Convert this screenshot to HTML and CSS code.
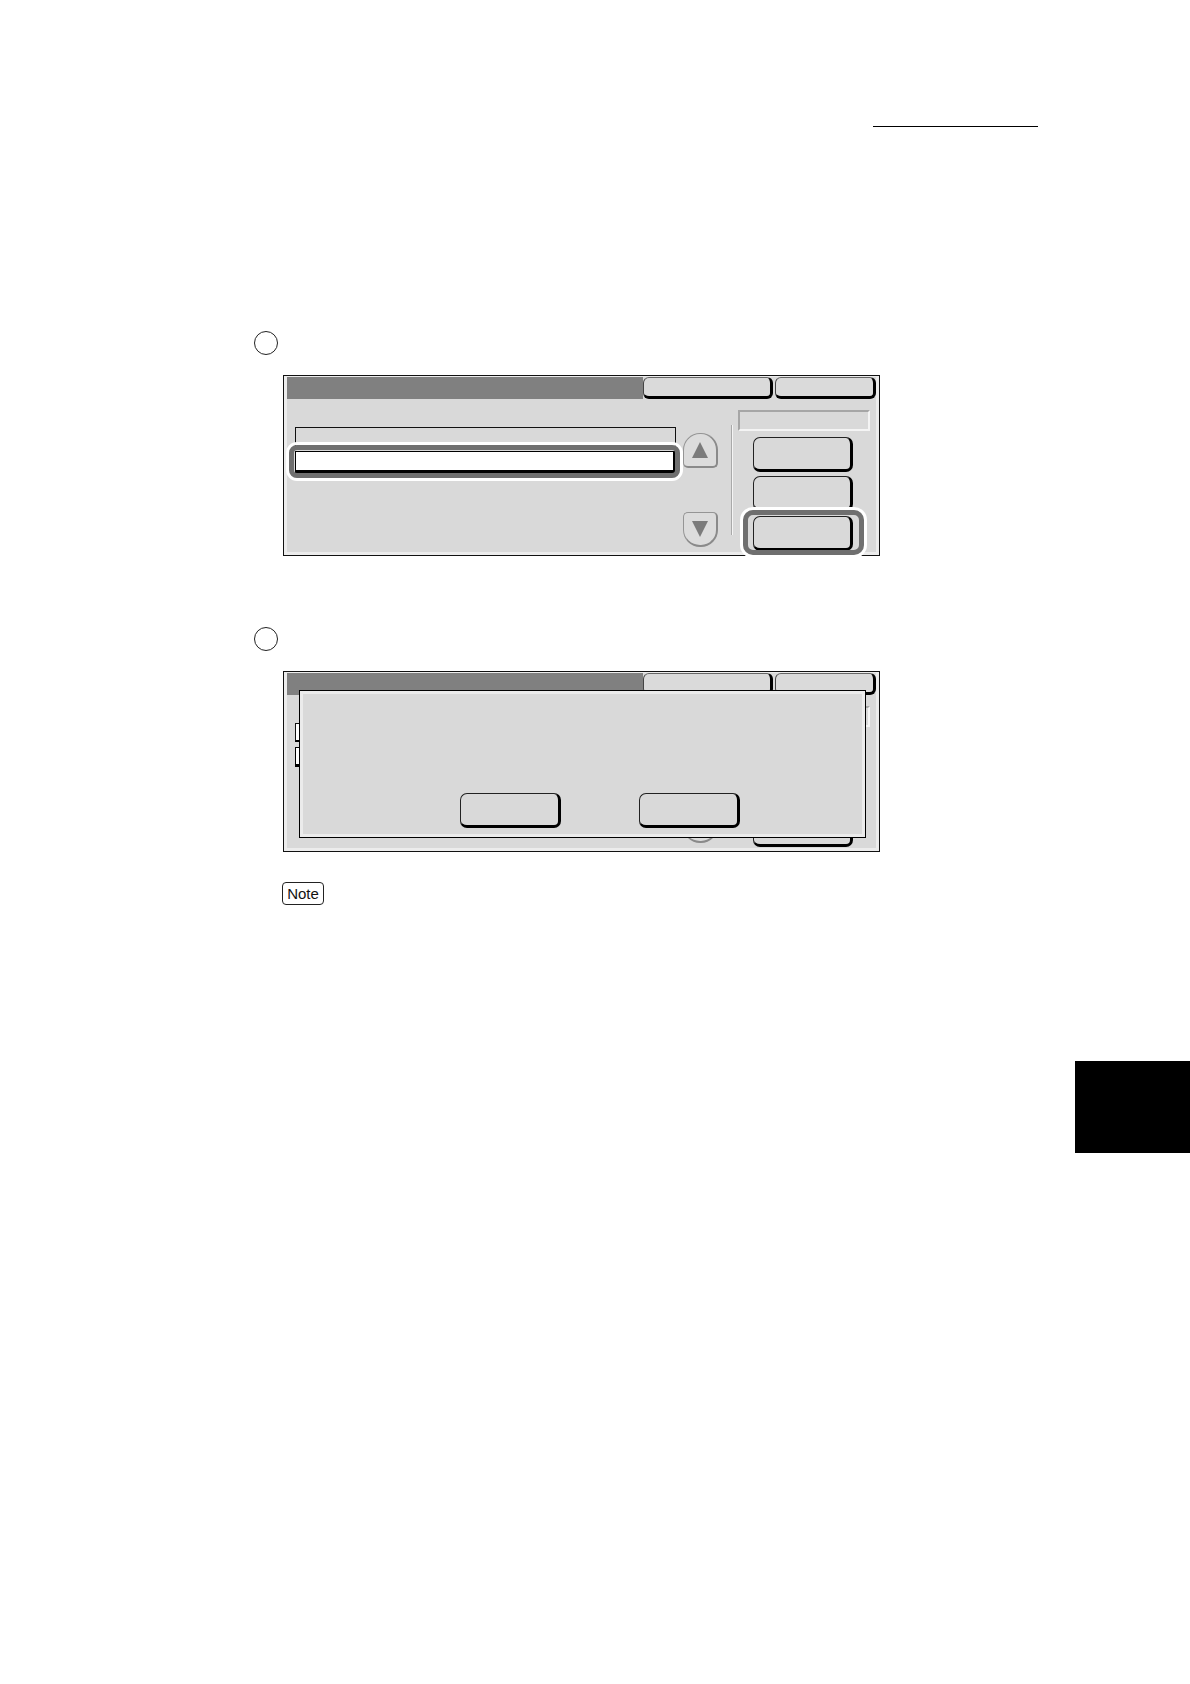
FILE: index.html
```html
<!DOCTYPE html>
<html>
<head>
<meta charset="utf-8">
<link rel="stylesheet" href="styles.css">
</head>
<body>
<div class="page">
  <div class="rule"></div>

  <div class="step step1"></div>
  <div class="panel">
    <div class="screen">
      <div class="titlebar"><div class="title"></div><div class="tab t1"></div><div class="tab t2"></div></div>
      <div class="body">
        <div class="list">
          <div class="list-head"></div>
          <div class="row sel"></div>
        </div>
        <div class="scroll"><div class="sbtn up"></div><div class="sbtn down"></div></div>
        <div class="sep"></div>
        <div class="side">
          <div class="sidebox"></div>
          <div class="btn b1"></div>
          <div class="btn b2"></div>
          <div class="btn b3 sel"></div>
        </div>
      </div>
    </div>
  </div>

  <div class="step step2"></div>
  <div class="panel alt">
    <div class="screen">
      <div class="titlebar"><div class="title"></div><div class="tab t1"></div><div class="tab t2"></div></div>
      <div class="body">
        <div class="list">
          <div class="list-head"></div>
          <div class="row"></div>
        </div>
        <div class="scroll"><div class="sbtn up"></div><div class="sbtn down"></div></div>
        <div class="sep"></div>
        <div class="side">
          <div class="sidebox"></div>
          <div class="btn b1"></div>
          <div class="btn b2"></div>
          <div class="btn b3"></div>
        </div>
      </div>
    </div>
    <div class="dialog">
      <div class="dbtn"></div>
      <div class="dbtn"></div>
    </div>
  </div>

  <div class="note">Note</div>

  <div class="thumb"></div>
</div>
</body>
</html>
```
FILE: styles.css
```css
* { box-sizing: border-box; }
html, body { margin: 0; padding: 0; background: #fff; }
body { font-family: "Liberation Sans", Arial, sans-serif; color: #111; }

.page {
  width: 1190px;
  height: 1684px;
  overflow: hidden;
  padding-top: 126px;
}

.rule {
  margin-left: 873px;
  width: 165px;
  height: 0;
  border-top: 1.5px solid #000;
}

.step {
  margin-left: 254px;
  width: 24px;
  height: 24px;
  border: 1.3px solid #222;
  border-radius: 50%;
}
.step1 { margin-top: 204px; }
.step2 { margin-top: 71px; }

.panel {
  position: relative;
  margin-left: 283px;
  margin-top: 20px;
  width: 597px;
  height: 181px;
  border: 1px solid #111;
  padding: 1px 3px 3px 3px;
  background: #ececec;
}

.screen {
  height: 100%;
  display: flex;
  flex-direction: column;
  background: #d9d9d9;
}

.titlebar {
  height: 22px;
  display: flex;
  background: #d9d9d9;
}
.title { width: 356px; background: #808080; }
.tab {
  height: 22px;
  background: #dadada;
  border-style: solid;
  border-color: #666 #000 #000 #444;
  border-width: 1px 3px 3px 1px;
  border-radius: 6px;
}
.t1 { width: 130px; }
.t2 { width: 101px; margin-left: 2px; }

.body {
  flex: 1;
  display: flex;
  align-items: flex-start;
  padding-left: 8px;
}

.list { width: 381px; margin-top: 28px; }
.list-head {
  height: 20px;
  border: 1px solid #111;
  border-bottom: none;
  background: #d9d9d9;
}
.row {
  position: relative;
  margin-top: 4px;
  height: 22px;
  background: #fff;
  border-style: solid;
  border-color: #000;
  border-width: 1px 3px 3px 1px;
}
.row.sel::after {
  content: "";
  position: absolute;
  top: -7px; left: -7px; right: -7px; bottom: -8px;
  border: 5px solid #6f6f6f;
  border-radius: 8px;
  box-shadow: 0 0 0 3px #fff;
}

.scroll {
  margin-left: 7px;
  margin-top: 34px;
  display: flex;
  flex-direction: column;
  gap: 44px;
}
.sbtn {
  width: 35px;
  height: 35px;
  display: flex;
  align-items: center;
  justify-content: center;
  background: #dcdcdc;
  border-style: solid;
  border-color: #959595 #8a8a8a #8a8a8a #959595;
  border-width: 1px 2px 2px 1px;
}
.up { border-radius: 17px 17px 5px 5px; }
.down { border-radius: 5px 5px 17px 17px; }
.up::before {
  content: "";
  width: 0; height: 0;
  border-left: 8.5px solid transparent;
  border-right: 8.5px solid transparent;
  border-bottom: 16px solid #7b7b7b;
}
.down::before {
  content: "";
  width: 0; height: 0;
  border-left: 8.5px solid transparent;
  border-right: 8.5px solid transparent;
  border-top: 16px solid #7b7b7b;
}

.sep {
  margin-left: 13px;
  margin-top: 26px;
  width: 2px;
  height: 110px;
  background: #f4f4f4;
  border-left: 1px solid #a9a9a9;
}

.side {
  margin-left: 5px;
  margin-top: 11px;
  width: 132px;
  display: flex;
  flex-direction: column;
}
.sidebox {
  height: 21px;
  border: 2px solid;
  border-color: #a6a6a6 #f4f4f4 #f4f4f4 #a6a6a6;
}
.btn {
  position: relative;
  margin-left: 15px;
  width: 100px;
  height: 35px;
  background: #d9d9d9;
  border-style: solid;
  border-color: #222 #000 #000 #222;
  border-width: 1px 3px 3px 1px;
  border-radius: 7px;
}
.b1 { margin-top: 6px; }
.b2 { margin-top: 4px; }
.b3 { margin-top: 5px; }
.btn.sel::after {
  content: "";
  position: absolute;
  top: -7px; left: -11px; right: -14px; bottom: -7px;
  border: 5px solid #6f6f6f;
  border-radius: 10px;
  box-shadow: 0 0 0 3px #fff;
}

/* second screen underneath dialog */
.alt .list-head {
  height: 19px;
  background: #fff;
  border-bottom: 2px solid #000;
}
.alt .row { margin-top: 5px; height: 20px; }

.dialog {
  position: absolute;
  left: 15px;
  top: 18px;
  width: 567px;
  height: 148px;
  border: 1px solid #000;
  background: #d9d9d9;
  box-shadow: inset 0 0 0 3px #ebebeb;
  display: flex;
  align-items: flex-start;
  padding-top: 102px;
  padding-left: 160px;
  gap: 78px;
}
.dbtn {
  width: 101px;
  height: 35px;
  background: #d9d9d9;
  border-style: solid;
  border-color: #222 #000 #000 #222;
  border-width: 1px 3px 3px 1px;
  border-radius: 7px;
}

.note {
  margin-left: 282px;
  margin-top: 30px;
  width: 42px;
  height: 23px;
  border: 1px solid #222;
  border-radius: 4px;
  font-size: 15px;
  line-height: 21px;
  text-align: center;
}

.thumb {
  margin-left: 1075px;
  margin-top: 156px;
  width: 115px;
  height: 92px;
  background: #000;
}
```
